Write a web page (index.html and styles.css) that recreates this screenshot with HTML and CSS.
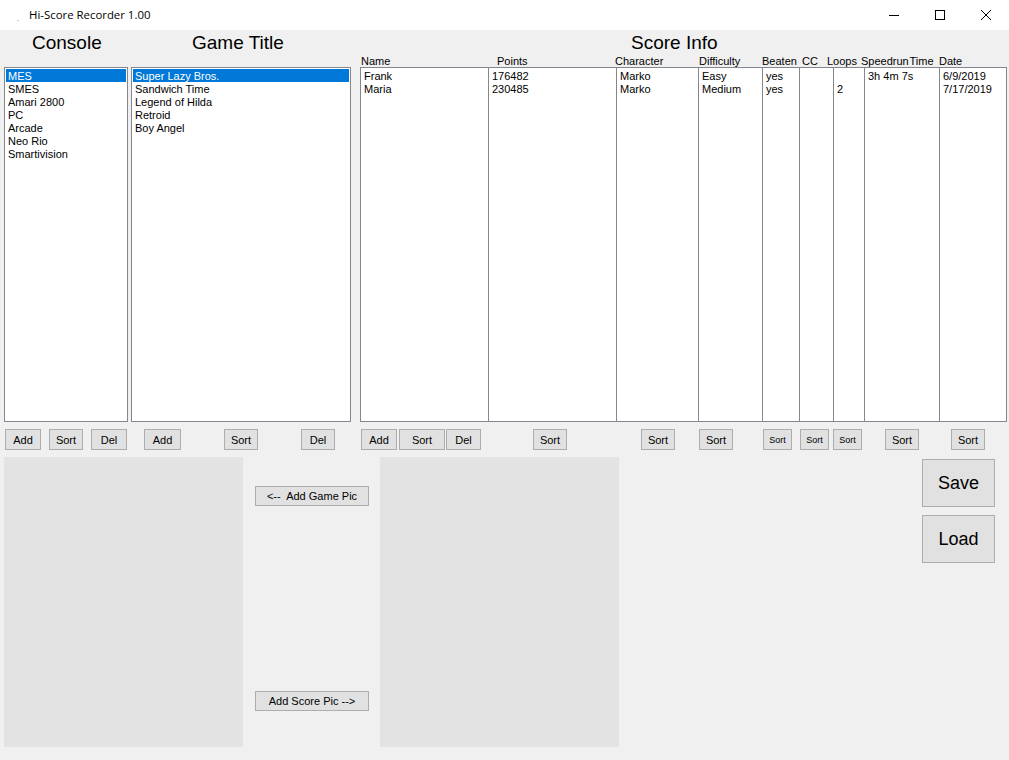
FILE: index.html
```html
<!DOCTYPE html>
<html lang="en">
<head>
    <meta charset="utf-8">
    <title>Hi-Score Recorder 1.00</title>
    <link rel="stylesheet" href="styles.css">
</head>
<body>
<div class="titlebar">
    <span class="appicon"></span>
    <span class="apptitle">Hi-Score Recorder 1.00</span>
    <div class="winctl">
        <span class="ctl"><svg width="10" height="10" viewBox="0 0 10 10"><path d="M0 5.5h10" stroke="#000" stroke-width="1"/></svg></span>
        <span class="ctl"><svg width="10" height="10" viewBox="0 0 10 10"><rect x="0.5" y="0.5" width="9" height="9" fill="none" stroke="#000" stroke-width="1"/></svg></span>
        <span class="ctl"><svg width="10" height="10" viewBox="0 0 10 10"><path d="M0 0L10 10M10 0L0 10" stroke="#000" stroke-width="1"/></svg></span>
    </div>
</div>

<div class="panels">
    <div class="panel" id="consolePanel">
        <div class="head"><div class="caption">Console</div></div>
        <ul class="list">
            <li class="sel">MES</li>
            <li>SMES</li>
            <li>Amari 2800</li>
            <li>PC</li>
            <li>Arcade</li>
            <li>Neo Rio</li>
            <li>Smartivision</li>
        </ul>
        <div class="btns">
            <button class="btn">Add</button>
            <button class="btn">Sort</button>
            <button class="btn">Del</button>
        </div>
    </div>

    <div class="panel" id="gamePanel">
        <div class="head"><div class="caption">Game Title</div></div>
        <ul class="list">
            <li class="sel">Super Lazy Bros.</li>
            <li>Sandwich Time</li>
            <li>Legend of Hilda</li>
            <li>Retroid</li>
            <li>Boy Angel</li>
        </ul>
        <div class="btns">
            <button class="btn">Add</button>
            <button class="btn">Sort</button>
            <button class="btn">Del</button>
        </div>
    </div>

    <div class="panel" id="scorePanel">
        <div class="head">
            <div class="caption">Score Info</div>
            <div class="cols">
                <span>Name</span>
                <span>Points</span>
                <span>Character</span>
                <span>Difficulty</span>
                <span>Beaten</span>
                <span>CC</span>
                <span>Loops</span>
                <span class="speedrun">Speedrun Time</span>
                <span>Date</span>
            </div>
        </div>
        <div class="scores">
            <ul class="col"><li>Frank</li><li>Maria</li></ul>
            <ul class="col"><li>176482</li><li>230485</li></ul>
            <ul class="col"><li>Marko</li><li>Marko</li></ul>
            <ul class="col"><li>Easy</li><li>Medium</li></ul>
            <ul class="col"><li>yes</li><li>yes</li></ul>
            <ul class="col"></ul>
            <ul class="col"><li>&nbsp;</li><li>2</li></ul>
            <ul class="col"><li>3h 4m 7s</li></ul>
            <ul class="col"><li>6/9/2019</li><li>7/17/2019</li></ul>
        </div>
        <div class="btns scorebtns">
            <button class="btn">Add</button>
            <button class="btn">Sort</button>
            <button class="btn">Del</button>
            <button class="btn">Sort</button>
            <button class="btn">Sort</button>
            <button class="btn">Sort</button>
            <button class="btn small">Sort</button>
            <button class="btn small">Sort</button>
            <button class="btn small">Sort</button>
            <button class="btn">Sort</button>
            <button class="btn">Sort</button>
        </div>
    </div>
</div>

<div class="lower">
    <div class="pic"></div>
    <div class="picbtns">
        <button class="btn" id="addGamePic">&lt;--&nbsp; Add Game Pic</button>
        <button class="btn" id="addScorePic">Add Score Pic --&gt;</button>
    </div>
    <div class="pic"></div>
    <div class="filebtns">
        <button class="btn big">Save</button>
        <button class="btn big">Load</button>
    </div>
</div>
</body>
</html>
```

FILE: styles.css
```css
body {
    margin: 0;
    padding: 0;
    background-color: #f0f0f0;
    color: #000;
    font-family: "Liberation Sans", Arial, sans-serif;
    font-size: 11px;
}

/* window caption */
.titlebar {
    height: 30px;
    background-color: #fff;
    display: flex;
    align-items: center;
}

.appicon {
    width: 2px;
    height: 1px;
    background-color: #c8c8c8;
    margin: 10px 0 0 17px;
}

.apptitle {
    font-family: "Open Sans", "Noto Sans", sans-serif;
    font-size: 11.4px;
    line-height: 30px;
    margin-left: 10px;
}

.winctl {
    margin-left: auto;
    align-self: flex-start;
    display: flex;
}

.ctl {
    width: 46px;
    height: 29px;
    display: flex;
    align-items: center;
    justify-content: center;
}

/* list panels */
.panels {
    display: flex;
    align-items: flex-start;
    padding-left: 4px;
}

#consolePanel {
    width: 124px;
}

#gamePanel {
    width: 220px;
    margin-left: 3px;
}

#scorePanel {
    width: 647px;
    margin-left: 9px;
}

.head {
    height: 37px;
    box-sizing: border-box;
    padding-top: 3px;
}

.caption {
    font-size: 19px;
    line-height: 19px;
    white-space: nowrap;
}

#consolePanel .caption {
    padding-left: 28px;
}

#gamePanel .caption {
    padding-left: 61px;
}

#scorePanel .caption {
    padding-left: 271px;
}

.cols {
    display: grid;
    grid-template-columns: 136px 118px 84px 63px 40px 25px 34px 78px auto;
    padding-left: 1px;
    margin-top: 3px;
    line-height: 12px;
    white-space: nowrap;
}

.speedrun {
    word-spacing: -2px;
}

.list {
    list-style: none;
    margin: 0;
    padding: 1px;
    height: 355px;
    box-sizing: border-box;
    border: 1px solid #828790;
    background-color: #fff;
}

.list li {
    height: 13px;
    line-height: 14px;
    padding-left: 2px;
    white-space: nowrap;
}

.list li.sel {
    background-color: #0078d7;
    color: #fff;
}

.scores {
    display: grid;
    grid-template-columns: 128px 128px 82px 64px 37px 34px 31px 75px 67px;
    height: 355px;
    box-sizing: border-box;
    border: 1px solid #828790;
    border-right: none;
    background-color: #fff;
}

.scores .col {
    list-style: none;
    margin: 0;
    padding: 1px 0 0 3px;
    border-right: 1px solid #828790;
}

.scores .col li {
    height: 13px;
    line-height: 14px;
    white-space: nowrap;
}

/* buttons */
.btn {
    width: 34px;
    height: 21px;
    box-sizing: border-box;
    padding: 0;
    border: 1px solid #adadad;
    background-color: #e1e1e1;
    color: #000;
    font-family: "Liberation Sans", Arial, sans-serif;
    font-size: 11px;
    white-space: nowrap;
}

.btn.small {
    width: 29px;
    font-size: 9px;
}

.btns {
    display: flex;
    height: 21px;
    margin-top: 7px;
}

#consolePanel .btns {
    justify-content: space-between;
    padding: 0 1px;
}

#consolePanel .btn:nth-child(odd) {
    width: 36px;
}

#gamePanel .btns {
    justify-content: space-between;
    padding: 0 16px 0 13px;
}

#gamePanel .btn:first-child {
    width: 37px;
}

.scorebtns .btn:nth-child(1) { width: 36px; margin-left: 1px; }
.scorebtns .btn:nth-child(2) { width: 46px; margin-left: 2px; }
.scorebtns .btn:nth-child(3) { width: 35px; margin-left: 1px; }
.scorebtns .btn:nth-child(4) { margin-left: 52px; }
.scorebtns .btn:nth-child(5) { margin-left: 74px; }
.scorebtns .btn:nth-child(6) { margin-left: 24px; }
.scorebtns .btn:nth-child(7) { margin-left: 30px; }
.scorebtns .btn:nth-child(8) { margin-left: 8px; }
.scorebtns .btn:nth-child(9) { margin-left: 4px; }
.scorebtns .btn:nth-child(10) { margin-left: 23px; }
.scorebtns .btn:nth-child(11) { margin-left: 32px; }

/* picture boxes */
.lower {
    display: flex;
    align-items: flex-start;
    padding-left: 4px;
    margin-top: 7px;
}

.pic {
    width: 239px;
    height: 290px;
    background-color: #e3e3e3;
}

.picbtns {
    width: 137px;
    box-sizing: border-box;
    padding-left: 12px;
    display: flex;
    flex-direction: column;
}

.picbtns .btn {
    width: 114px;
    height: 20px;
}

#addGamePic {
    margin-top: 29px;
}

#addScorePic {
    margin-top: 185px;
}

.filebtns {
    margin-left: 303px;
    padding-top: 2px;
    display: flex;
    flex-direction: column;
    gap: 8px;
}

.btn.big {
    width: 73px;
    height: 48px;
    font-size: 18px;
}
```
